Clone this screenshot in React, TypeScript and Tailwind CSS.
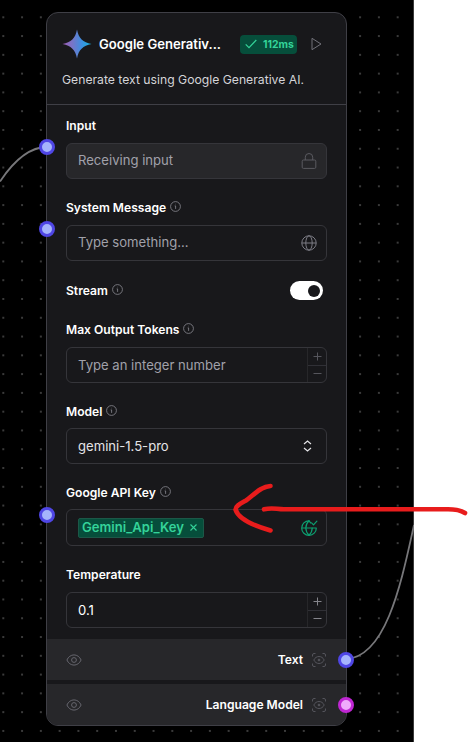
import React from "react";

const Info = () => (
  <svg className="mb-[3px] ml-1 h-[11px] w-[11px] shrink-0 text-[#8b8b93]" viewBox="0 0 11 11" fill="none" stroke="currentColor" strokeWidth="0.8">
    <circle cx="5.5" cy="5.5" r="4.9" />
    <path d="M4.7 4.9h.9v3M5.4 3.1h.4" />
  </svg>
);

const Label = ({ text, info = false }: { text: string; info?: boolean }) => (
  <div className="flex h-5 items-center whitespace-nowrap text-[12.1px] font-semibold text-white">
    {text}
    {info && <Info />}
  </div>
);

const Lock = () => (
  <svg className="h-[18px] w-[18px] text-[#5a5a60]" viewBox="0 0 18 18" fill="none" stroke="currentColor" strokeWidth="1">
    <rect x="2.2" y="8" width="13.6" height="8.4" rx="1.2" />
    <path d="M5.3 8V5.2a3.7 3.7 0 0 1 7.4 0V8" />
  </svg>
);

const Globe = () => (
  <svg className="h-[18px] w-[18px] text-[#7c7c85]" viewBox="0 0 18 18" fill="none" stroke="currentColor" strokeWidth="1">
    <circle cx="9" cy="9" r="7.2" />
    <ellipse cx="9" cy="9" rx="3.2" ry="7.2" />
    <path d="M1.8 9h14.4" />
  </svg>
);

const GlobeCheck = () => (
  <svg className="h-[18px] w-[18px] text-[#0c9f70]" viewBox="0 0 18 18" fill="none" stroke="currentColor" strokeWidth="1.2" strokeLinecap="round" strokeLinejoin="round">
    <path d="M9 1.8a7.3 7.3 0 1 0 7.3 7.2H1.7" />
    <path d="M9 1.8c-4.2 4-4.2 10.4 0 14.5 2.2-2.1 3.2-4.6 3.2-7.3" />
    <path d="M9 1.8c.7.7 1.2 1.4 1.6 2.1M11.6 3.900l1.900 1.900L16.900 2.200" />
  </svg>
);

const Eye = () => (
  <svg className="h-4 w-4 text-[#66666e]" viewBox="0 0 16 16" fill="none" stroke="currentColor" strokeWidth="1">
    <path d="M.9 8C2.3 4.800 5 2.900 8 2.900S13.700 4.800 15.100 8c-1.400 3.200-4.100 5.100-7.100 5.100S2.300 11.200.9 8Z" />
    <circle cx="8" cy="8" r="2.4" />
  </svg>
);

const ScanEye = () => (
  <svg className="h-4 w-4 text-[#55555c]" viewBox="0 0 16 16" fill="none" stroke="currentColor" strokeWidth="1">
    <path d="M1.5 4.500v-1.500a1.500 1.500 0 0 1 1.500-1.500h1.500M11.500 1.500h1.500a1.500 1.500 0 0 1 1.500 1.500v1.500M14.500 11.500v1.500a1.500 1.500 0 0 1-1.500 1.500h-1.500M4.500 14.500h-1.500a1.500 1.500 0 0 1-1.500-1.500v-1.500" />
    <path d="M2.800 8c1.200-2.300 3-3.500 5.200-3.500s4 1.200 5.200 3.500c-1.200 2.300-3 3.500-5.200 3.500s-4-1.200-5.200-3.500Z" />
    <circle cx="8" cy="8" r="0.900" fill="currentColor" />
  </svg>
);

const Stepper = ({ tone }: { tone: string }) => (
  <div className={`flex w-[19px] flex-col self-stretch border-l border-[#27272a] ${tone}`}>
    <div className="flex flex-1 items-center justify-center border-b border-[#303036]">
      <svg className="h-[9px] w-[9px]" viewBox="0 0 9 9" stroke="currentColor" strokeWidth="1"><path d="M.5 4.500h8M4.500.5v8" /></svg>
    </div>
    <div className="flex flex-1 items-center justify-center">
      <svg className="h-[9px] w-[9px]" viewBox="0 0 9 9" stroke="currentColor" strokeWidth="1"><path d="M.5 4.500h8" /></svg>
    </div>
  </div>
);

const Handle = ({ place, pink = false }: { place: string; pink?: boolean }) => (
  <div className={`absolute h-4 w-4 rounded-full border-[3px] ${pink ? "border-[#c026d3] bg-[#f0abfc]" : "border-[#4f46e5] bg-[#a5b4fc]"} ${place}`} />
);

const field = "flex h-9 items-center justify-between overflow-hidden rounded-[6px] border border-[#35353a] pl-[11px] text-[13.1px]";

const Output = ({ name }: { name: string }) => (
  <div className="flex h-[41px] items-center bg-[#27272a] pl-[19px] pr-[19px]">
    <Eye />
    <span className="ml-auto mr-2 pt-px text-[12.1px] font-semibold text-white">{name}</span>
    <ScanEye />
  </div>
);

export default function App() {
  return (
    <div className="relative h-[742px] w-[468px] overflow-hidden bg-white font-['Inter','Liberation_Sans',sans-serif]">
      <svg className="absolute left-0 top-0 h-[742px] w-[414px]" viewBox="0 0 414 742" fill="none">
        <defs>
          <pattern id="dots" x="2.300" y="16.300" width="18.780" height="18.780" patternUnits="userSpaceOnUse">
            <circle cx="1" cy="1" r="0.900" fill="#555" />
          </pattern>
        </defs>
        <path d="M0 0h414v742H0z" fill="#000" />
        <path d="M0 0h414v742H0z" fill="url(#dots)" />
        <path d="M413.500 0v742" stroke="#3a3a3a" />
        <path d="M47 147C28 147 13 162 0 181.500M346 659C387 657 402 579 414 525" stroke="#77777a" strokeWidth="1.800" />
      </svg>

      <div className="relative ml-[46px] mt-[12px] flex h-[714px] w-[301px] flex-col rounded-[12px] border border-[#3f3f46] bg-[#18181b]">
        <header className="flex h-[92px] flex-col border-b border-[#3f3f46] pl-[15px]">
          <div className="mt-4 flex h-[30px] items-center">
            <svg className="h-[30px] w-[30px]" viewBox="0 0 30 30">
              <defs>
                <linearGradient id="spark" x1="0" x2="1" y1="0" y2="0">
                  <stop offset="0" stopColor="#a05ab4" />
                  <stop offset=".35" stopColor="#7676c8" />
                  <stop offset=".65" stopColor="#3f8ee0" />
                  <stop offset="1" stopColor="#14b4dc" />
                </linearGradient>
              </defs>
              <path d="M15 .5C16.500 9 21 13.500 29.500 15 21 16.500 16.500 21 15 29.500 13.500 21 9 16.500.5 15 9 13.500 13.500 9 15 .5Z" fill="url(#spark)" />
            </svg>
            <span className="ml-[7px] w-[122px] whitespace-nowrap pt-0.5 text-[13.1px] font-semibold text-white">Google Generativ...</span>
            <span className="ml-[19px] flex h-[19px] w-[57px] items-center rounded-[4px] bg-[#064e3b] pl-[5px] text-[10.4px] font-bold text-[#34d399]">
              <svg className="mr-[6px] h-3 w-3" viewBox="0 0 12 12" fill="none" stroke="currentColor" strokeWidth="1.200"><path d="M.7 6.300l3.300 3.400L11.300 2" /></svg>
              <span className="pt-px">112ms</span>
            </span>
            <svg className="ml-[13px] h-[14px] w-[13px]" viewBox="0 0 13 14" fill="none" stroke="#717179" strokeWidth="1"><path d="M2 1.300v11.400l9-5.700Z" strokeLinejoin="round" /></svg>
          </div>
          <p className="mt-[11px] text-[12.2px] leading-5 text-[#d4d4d8]">Generate text using Google Generative AI.</p>
        </header>

        <main className="flex h-[534px] flex-col px-[19px] pt-[11px]">
          <Label text="Input" />
          <div className={`${field} mt-[7px] bg-[#27272a] pr-2 text-[#a1a1aa]`}>Receiving input<Lock /></div>
          <div className="mt-[19px]"><Label text="System Message" info /></div>
          <div className={`${field} mt-[7px] pr-2 text-[#a1a1aa]`}>Type something...<Globe /></div>
          <div className="mt-[20px] flex items-start justify-between pr-1">
            <Label text="Stream" info />
            <div className="flex h-[19px] w-[33px] items-center justify-end rounded-full bg-white pr-[3px]"><div className="h-3 w-3 rounded-full bg-[#18181b]" /></div>
          </div>
          <div className="mt-[19px]"><Label text="Max Output Tokens" info /></div>
          <div className={`${field} mt-[7px] text-[#a1a1aa]`}><span className="pt-0.5">Type an integer number</span><Stepper tone="text-[#55555c]" /></div>
          <div className="mt-[19px]"><Label text="Model" info /></div>
          <div className={`${field} mt-[6px] pr-[14px] text-[#e4e4e7]`}>
            <span className="pt-px">gemini-1.5-pro</span>
            <svg className="h-3 w-[9px]" viewBox="0 0 9 12" fill="none" stroke="currentColor" strokeWidth="1.200"><path d="M1 4l3.500-3L8 4M1 8l3.500 3L8 8" /></svg>
          </div>
          <div className="mt-[19px]"><Label text="Google API Key" info /></div>
          <div className="mt-[6px] flex h-[37px] items-center justify-between rounded-[6px] border border-[#35353a] pl-[11px] pr-2">
            <span className="flex h-5 w-[126px] items-center rounded-[2px] border border-[#1c5848] bg-[#064e3b] pl-[3px] text-[13.1px] font-semibold text-[#34d399]">
              Gemini_Api_Key
              <svg className="ml-[6px] h-[7px] w-[7px]" viewBox="0 0 7 7" stroke="currentColor" strokeWidth="1.100"><path d="M.5.5l6 6M6.500.5l-6 6" /></svg>
            </span>
            <GlobeCheck />
          </div>
          <div className="mt-[19px]"><Label text="Temperature" /></div>
          <div className={`${field} mt-[7px] text-white`}><span className="pt-0.5">0.1</span><Stepper tone="text-[#85858c]" /></div>
        </main>

        <footer className="flex flex-col gap-1 overflow-hidden rounded-b-[11px]">
          <Output name="Text" />
          <Output name="Language Model" />
        </footer>

        <Handle place="left-[-8px] top-[126px]" />
        <Handle place="left-[-8px] top-[208px]" />
        <Handle place="left-[-8px] top-[494px]" />
        <Handle place="right-[-8px] top-[639px]" />
        <Handle place="right-[-8px] top-[684px]" pink />
      </div>

      <svg className="absolute left-0 top-0 h-[742px] w-[468px]" viewBox="0 0 468 742" fill="none" stroke="#e81c1c" strokeWidth="4.600" strokeLinecap="round" strokeLinejoin="round">
        <path d="M270.500 486C260 486.500 253 496 246 500.500C240 504 235.500 506 235.500 509.500C238 517.500 251 525 270.500 530.500" />
        <path d="M264 509.300C273 507.300 276 509.300 284 509.300H448C457 509.300 461 510.500 465 513" />
      </svg>
    </div>
  );
}
